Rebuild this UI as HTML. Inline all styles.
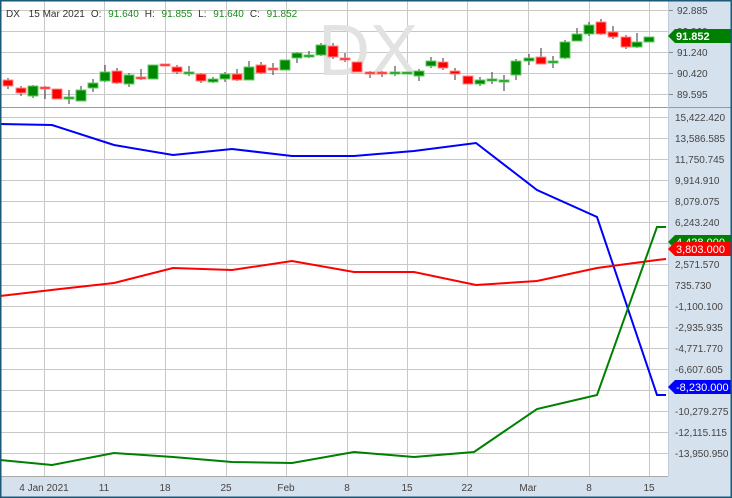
<!DOCTYPE html><html><head><style>
body{margin:0;background:#fff;}
svg{display:block;font-family:"Liberation Sans",sans-serif;}
</style></head><body>
<svg width="732" height="498" viewBox="0 0 732 498" xmlns="http://www.w3.org/2000/svg">
<rect x="0" y="0" width="732" height="498" fill="#fff"/>
<rect x="668" y="0" width="64" height="498" fill="#d6e1ee"/>
<rect x="0" y="476" width="732" height="22" fill="#d6e1ee"/>
<g stroke="#c8c8c8" stroke-width="1">
<line x1="44.5" y1="0" x2="44.5" y2="476"/><line x1="104.5" y1="0" x2="104.5" y2="476"/><line x1="165.5" y1="0" x2="165.5" y2="476"/><line x1="226.5" y1="0" x2="226.5" y2="476"/><line x1="286.5" y1="0" x2="286.5" y2="476"/><line x1="347.5" y1="0" x2="347.5" y2="476"/><line x1="407.5" y1="0" x2="407.5" y2="476"/><line x1="467.5" y1="0" x2="467.5" y2="476"/><line x1="528.5" y1="0" x2="528.5" y2="476"/><line x1="589.5" y1="0" x2="589.5" y2="476"/><line x1="649.5" y1="0" x2="649.5" y2="476"/>
<line x1="0" y1="10.5" x2="668" y2="10.5"/><line x1="0" y1="31.5" x2="668" y2="31.5"/><line x1="0" y1="52.5" x2="668" y2="52.5"/><line x1="0" y1="73.5" x2="668" y2="73.5"/><line x1="0" y1="94.5" x2="668" y2="94.5"/>
<line x1="0" y1="117.5" x2="668" y2="117.5"/><line x1="0" y1="138.5" x2="668" y2="138.5"/><line x1="0" y1="159.5" x2="668" y2="159.5"/><line x1="0" y1="180.5" x2="668" y2="180.5"/><line x1="0" y1="201.5" x2="668" y2="201.5"/><line x1="0" y1="222.5" x2="668" y2="222.5"/><line x1="0" y1="243.5" x2="668" y2="243.5"/><line x1="0" y1="264.5" x2="668" y2="264.5"/><line x1="0" y1="285.5" x2="668" y2="285.5"/><line x1="0" y1="306.5" x2="668" y2="306.5"/><line x1="0" y1="327.5" x2="668" y2="327.5"/><line x1="0" y1="348.5" x2="668" y2="348.5"/><line x1="0" y1="369.5" x2="668" y2="369.5"/><line x1="0" y1="390.5" x2="668" y2="390.5"/><line x1="0" y1="411.5" x2="668" y2="411.5"/><line x1="0" y1="432.5" x2="668" y2="432.5"/><line x1="0" y1="453.5" x2="668" y2="453.5"/>
</g>
<line x1="0" y1="107.5" x2="732" y2="107.5" stroke="#999" stroke-width="1"/>
<line x1="668.5" y1="0" x2="668.5" y2="476" stroke="#c0ccd8"/>
<text x="368" y="75" font-size="72" fill="#e2e2e2" text-anchor="middle">DX</text>
<text x="6" y="17" font-size="10" fill="#333">DX <tspan dx="6">15 Mar 2021</tspan><tspan dx="6">O:</tspan> <tspan dx="4" fill="#1a8a1a">91.640</tspan><tspan dx="6">H:</tspan> <tspan dx="4" fill="#1a8a1a">91.855</tspan><tspan dx="6">L:</tspan> <tspan dx="4" fill="#1a8a1a">91.640</tspan><tspan dx="6">C:</tspan> <tspan dx="4" fill="#1a8a1a">91.852</tspan></text>
<g id="c" stroke="#333" stroke-width="1">
<!-- candles: x, top, bottom, color -->
</g>
<g stroke-width="1">
<line x1="8" y1="78" x2="8" y2="89" stroke="#333"/><rect x="3" y="80" width="10" height="6" fill="#f00" stroke="#f88"/>
<line x1="21" y1="86" x2="21" y2="96" stroke="#333"/><rect x="16" y="88" width="10" height="5" fill="#f00" stroke="#f88"/>
<line x1="33" y1="85" x2="33" y2="98" stroke="#333"/><rect x="28" y="86" width="10" height="10" fill="#080" stroke="#6c6"/>
<line x1="45" y1="86" x2="45" y2="99" stroke="#333"/><rect x="40" y="87" width="10" height="2" fill="#f00" stroke="#f88"/>
<rect x="52" y="89" width="10" height="10" fill="#f00" stroke="#f88"/>
<line x1="69" y1="90" x2="69" y2="104" stroke="#333"/><rect x="64" y="97" width="10" height="2" fill="#080" stroke="#6c6"/>
<line x1="81" y1="86" x2="81" y2="101" stroke="#333"/><rect x="76" y="90" width="10" height="11" fill="#080" stroke="#6c6"/>
<line x1="93" y1="79" x2="93" y2="92" stroke="#333"/><rect x="88" y="83" width="10" height="5" fill="#080" stroke="#6c6"/>
<line x1="105" y1="65" x2="105" y2="82" stroke="#333"/><rect x="100" y="72" width="10" height="9" fill="#080" stroke="#6c6"/>
<line x1="117" y1="68" x2="117" y2="84" stroke="#333"/><rect x="112" y="71" width="10" height="12" fill="#f00" stroke="#f88"/>
<line x1="129" y1="73" x2="129" y2="87" stroke="#333"/><rect x="124" y="75" width="10" height="9" fill="#080" stroke="#6c6"/>
<line x1="141" y1="69" x2="141" y2="80" stroke="#333"/><rect x="136" y="77" width="10" height="2" fill="#f00" stroke="#f88"/>
<rect x="148" y="65" width="10" height="14" fill="#080" stroke="#6c6"/>
<rect x="160" y="64" width="10" height="2" fill="#f00" stroke="#f88"/>
<line x1="177" y1="65" x2="177" y2="74" stroke="#333"/><rect x="172" y="67" width="10" height="5" fill="#f00" stroke="#f88"/>
<line x1="189" y1="66" x2="189" y2="76" stroke="#333"/><rect x="184" y="72" width="10" height="2" fill="#080" stroke="#6c6"/>
<line x1="201" y1="73" x2="201" y2="83" stroke="#333"/><rect x="196" y="74" width="10" height="7" fill="#f00" stroke="#f88"/>
<line x1="213" y1="77" x2="213" y2="83" stroke="#333"/><rect x="208" y="79" width="10" height="3" fill="#080" stroke="#6c6"/>
<line x1="225" y1="72" x2="225" y2="82" stroke="#333"/><rect x="220" y="74" width="10" height="5" fill="#080" stroke="#6c6"/>
<line x1="237" y1="69" x2="237" y2="81" stroke="#333"/><rect x="232" y="74" width="10" height="6" fill="#f00" stroke="#f88"/>
<line x1="249" y1="61" x2="249" y2="80" stroke="#333"/><rect x="244" y="67" width="10" height="13" fill="#080" stroke="#6c6"/>
<line x1="261" y1="62" x2="261" y2="74" stroke="#333"/><rect x="256" y="65" width="10" height="8" fill="#f00" stroke="#f88"/>
<line x1="273" y1="63" x2="273" y2="75" stroke="#333"/><rect x="268" y="68" width="10" height="2" fill="#f00" stroke="#f88"/>
<rect x="280" y="60" width="10" height="10" fill="#080" stroke="#6c6"/>
<line x1="297" y1="52" x2="297" y2="63" stroke="#333"/><rect x="292" y="53" width="10" height="5" fill="#080" stroke="#6c6"/>
<line x1="309" y1="51" x2="309" y2="58" stroke="#333"/><rect x="304" y="55" width="10" height="2" fill="#080" stroke="#6c6"/>
<line x1="321" y1="43" x2="321" y2="56" stroke="#333"/><rect x="316" y="45" width="10" height="10" fill="#080" stroke="#6c6"/>
<line x1="333" y1="43" x2="333" y2="59" stroke="#333"/><rect x="328" y="46" width="10" height="11" fill="#f00" stroke="#f88"/>
<line x1="345" y1="53" x2="345" y2="62" stroke="#333"/><rect x="340" y="58" width="10" height="2" fill="#f00" stroke="#f88"/>
<rect x="352" y="62" width="10" height="10" fill="#f00" stroke="#f88"/>
<line x1="370" y1="71" x2="370" y2="78" stroke="#333"/><rect x="365" y="72" width="10" height="2" fill="#f00" stroke="#f88"/>
<line x1="382" y1="71" x2="382" y2="77" stroke="#333"/><rect x="377" y="72" width="10" height="2" fill="#f00" stroke="#f88"/>
<line x1="395" y1="66" x2="395" y2="76" stroke="#333"/><rect x="390" y="72" width="10" height="2" fill="#080" stroke="#6c6"/>
<rect x="402" y="72" width="10" height="2" fill="#080" stroke="#6c6"/>
<line x1="419" y1="69" x2="419" y2="81" stroke="#333"/><rect x="414" y="71" width="10" height="5" fill="#080" stroke="#6c6"/>
<line x1="431" y1="57" x2="431" y2="68" stroke="#333"/><rect x="426" y="61" width="10" height="5" fill="#080" stroke="#6c6"/>
<line x1="443" y1="58" x2="443" y2="70" stroke="#333"/><rect x="438" y="62" width="10" height="6" fill="#f00" stroke="#f88"/>
<line x1="455" y1="68" x2="455" y2="80" stroke="#333"/><rect x="450" y="71" width="10" height="3" fill="#f00" stroke="#f88"/>
<rect x="463" y="76" width="10" height="8" fill="#f00" stroke="#f88"/>
<line x1="480" y1="77" x2="480" y2="86" stroke="#333"/><rect x="475" y="80" width="10" height="4" fill="#080" stroke="#6c6"/>
<line x1="492" y1="72" x2="492" y2="84" stroke="#333"/><rect x="487" y="79" width="10" height="2" fill="#080" stroke="#6c6"/>
<line x1="504" y1="75" x2="504" y2="91" stroke="#333"/><rect x="499" y="80" width="10" height="2" fill="#080" stroke="#6c6"/>
<line x1="516" y1="59" x2="516" y2="80" stroke="#333"/><rect x="511" y="61" width="10" height="14" fill="#080" stroke="#6c6"/>
<line x1="529" y1="54" x2="529" y2="65" stroke="#333"/><rect x="524" y="58" width="10" height="3" fill="#080" stroke="#6c6"/>
<line x1="541" y1="48" x2="541" y2="64" stroke="#333"/><rect x="536" y="57" width="10" height="7" fill="#f00" stroke="#f88"/>
<line x1="553" y1="56" x2="553" y2="68" stroke="#333"/><rect x="548" y="61" width="10" height="2" fill="#080" stroke="#6c6"/>
<line x1="565" y1="40" x2="565" y2="59" stroke="#333"/><rect x="560" y="42" width="10" height="16" fill="#080" stroke="#6c6"/>
<line x1="577" y1="28" x2="577" y2="41" stroke="#333"/><rect x="572" y="34" width="10" height="7" fill="#080" stroke="#6c6"/>
<line x1="589" y1="22" x2="589" y2="36" stroke="#333"/><rect x="584" y="25" width="10" height="9" fill="#080" stroke="#6c6"/>
<line x1="601" y1="19" x2="601" y2="35" stroke="#333"/><rect x="596" y="22" width="10" height="12" fill="#f00" stroke="#f88"/>
<line x1="613" y1="26" x2="613" y2="39" stroke="#333"/><rect x="608" y="32" width="10" height="5" fill="#f00" stroke="#f88"/>
<line x1="626" y1="35" x2="626" y2="49" stroke="#333"/><rect x="621" y="37" width="10" height="10" fill="#f00" stroke="#f88"/>
<line x1="637" y1="33" x2="637" y2="48" stroke="#333"/><rect x="632" y="42" width="10" height="5" fill="#080" stroke="#6c6"/>
<rect x="644" y="37" width="10" height="5" fill="#080" stroke="#6c6"/>
</g>
<g fill="none" stroke-width="2">
<polyline stroke="#0000ff" points="0,124 52,125 114,145 173,155 232,149 292,156 354,156 414,151 476,143 537,190 597,217 657,395 666,395"/>
<polyline stroke="#ff0000" points="0,296 60,289 114,283 173,268 232,270 292,261 354,272 414,272 476,285 537,281 597,268 657,260 666,259"/>
<polyline stroke="#008000" points="0,460 52,465 114,453 173,457 232,462 292,463 354,452 414,457 474,452 537,409 597,395 657,227 666,227"/>
</g>
<g font-size="10" fill="#444">
<text x="677" y="14">92.885</text><text x="677" y="35">92.060</text><text x="677" y="56">91.240</text><text x="677" y="77">90.420</text><text x="677" y="98">89.595</text>
<text x="675" y="121">15,422.420</text><text x="675" y="142">13,586.585</text><text x="675" y="163">11,750.745</text><text x="675" y="184">9,914.910</text><text x="675" y="205">8,079.075</text><text x="675" y="226">6,243.240</text><text x="675" y="268">2,571.570</text><text x="675" y="289">735.730</text><text x="675" y="310">-1,100.100</text><text x="675" y="331">-2,935.935</text><text x="675" y="352">-4,771.770</text><text x="675" y="373">-6,607.605</text><text x="675" y="415">-10,279.275</text><text x="675" y="436">-12,115.115</text><text x="675" y="457">-13,950.950</text>
</g>
<g stroke="#888"><line x1="669" y1="10.5" x2="673" y2="10.5"/><line x1="669" y1="52.5" x2="673" y2="52.5"/><line x1="669" y1="73.5" x2="673" y2="73.5"/><line x1="669" y1="94.5" x2="673" y2="94.5"/></g>
<path d="M668,36 L675,29 L732,29 L732,43 L675,43 Z" fill="#008000"/>
<text x="676" y="40" font-size="11" font-weight="bold" fill="#fff">91.852</text>
<path d="M668,242 L675,235 L732,235 L732,249 L675,249 Z" fill="#008000"/>
<text x="676" y="246" font-size="11" fill="#fff">4,428.000</text>
<path d="M668,249 L675,242 L732,242 L732,256 L675,256 Z" fill="#ff0000"/>
<text x="676" y="253" font-size="11" fill="#fff">3,803.000</text>
<path d="M668,387 L675,380 L732,380 L732,394 L675,394 Z" fill="#0000ff"/>
<text x="676" y="391" font-size="11" fill="#fff">-8,230.000</text>
<g font-size="10" fill="#444" text-anchor="middle">
<text x="44" y="491">4 Jan 2021</text><text x="104" y="491">11</text><text x="165" y="491">18</text><text x="226" y="491">25</text><text x="286" y="491">Feb</text><text x="347" y="491">8</text><text x="407" y="491">15</text><text x="467" y="491">22</text><text x="528" y="491">Mar</text><text x="589" y="491">8</text><text x="649" y="491">15</text>
</g>
<line x1="0" y1="476.5" x2="668" y2="476.5" stroke="#aaa"/>
<rect x="0.75" y="0.75" width="730.5" height="496.5" fill="none" stroke="#1a5a78" stroke-width="1.5"/>
</svg>
</body></html>
